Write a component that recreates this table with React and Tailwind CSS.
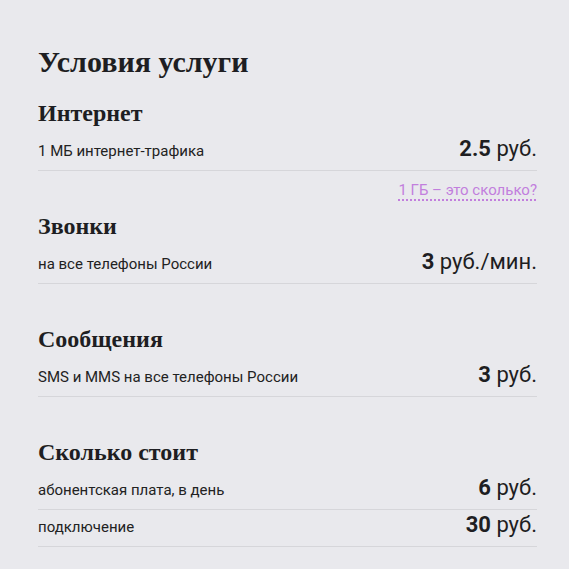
const sections = [
  {
    title: 'Интернет',
    rows: [{ label: '1 МБ интернет-трафика', value: '2.5', unit: 'руб.' }],
    link: '1 ГБ – это сколько?',
  },
  {
    title: 'Звонки',
    rows: [{ label: 'на все телефоны России', value: '3', unit: 'руб./мин.' }],
  },
  {
    title: 'Сообщения',
    rows: [{ label: 'SMS и MMS на все телефоны России', value: '3', unit: 'руб.' }],
  },
  {
    title: 'Сколько стоит',
    rows: [
      { label: 'абонентская плата, в день', value: '6', unit: 'руб.' },
      { label: 'подключение', value: '30', unit: 'руб.' },
    ],
  },
]

const serif = "font-['Liberation_Serif',serif]"
const sans = "font-['Roboto',sans-serif]"

function Row({ label, value, unit }) {
  return (
    <div className="flex h-[37px] items-baseline justify-between pt-[3px] border-b border-[#d6d6da]">
      <span className={`${sans} text-[15px] leading-[24px] text-[#222]`}>{label}</span>
      <span className={`${sans} text-[22px] leading-[24px] text-[#1e1e22]`}>
        <b className="font-bold">{value}</b> {unit}
      </span>
    </div>
  )
}

export default function App() {
  return (
    <div className="min-h-screen bg-[#e9e9ed] pl-[38px] pr-[32px] pt-[44px] pb-[20px]">
      <h1 className={`${serif} font-bold text-[30px] leading-[36px] text-[#1e1e22] mb-[20px]`}>
        Условия услуги
      </h1>
      {sections.map((s) => (
        <section key={s.title} className={s.link ? '' : 'pb-[42px]'}>
          <h2 className={`${serif} font-bold text-[24px] leading-[26px] text-[#1e1e22] mb-[8px]`}>
            {s.title}
          </h2>
          {s.rows.map((r) => (
            <Row key={r.label} {...r} />
          ))}
          {s.link && (
            <div className="h-[42px] pt-[6px] text-right">
              <a
                href="#"
                className={`${sans} text-[15px] leading-[20px] text-[#c27fdd] underline decoration-dotted decoration-[2px] underline-offset-[4px]`}
              >
                {s.link}
              </a>
            </div>
          )}
        </section>
      ))}
    </div>
  )
}
